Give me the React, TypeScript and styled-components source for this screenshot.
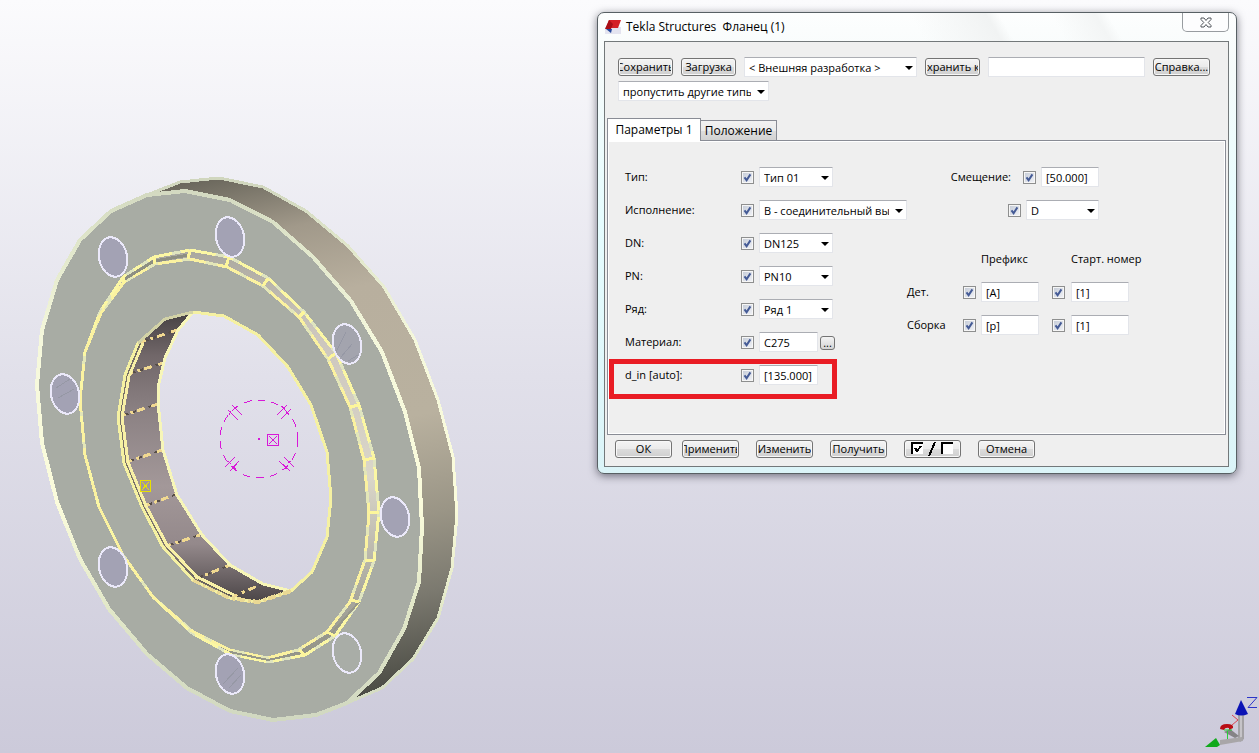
import React, { useId } from "react";
import styled, { createGlobalStyle } from "styled-components";

const GlobalStyle = createGlobalStyle`
  * { box-sizing: border-box; }
  body {
    margin: 0;
    font-family: "Open Sans", "Noto Sans", sans-serif;
    font-size: 11px;
    line-height: 16px;
    color: #000;
  }
  button, input, select { font: inherit; color: inherit; margin: 0; }
`;

const Viewport = styled.main`
  position: relative;
  min-height: 100vh;
  overflow: hidden;
  background: linear-gradient(#fbfbfd, #e1e0ea 50%, #cccada);
`;

const ModelView = styled.svg`
  display: block;
`;

const AxisTriad = styled.svg`
  position: absolute;
  right: 0;
  bottom: 0;
`;

const Dialog = styled.section`
  position: absolute;
  left: 597px;
  top: 12px;
  width: 640px;
  padding: 0 7px 6px 6px;
  border: 1px solid #586064;
  border-radius: 7px;
  background: linear-gradient(#fdfefe, #f6fbfb 12%, #e6fdff 45%, #dbf4f8);
  box-shadow: 0 2px 8px rgba(40, 40, 55, 0.6);
`;

const TitleBar = styled.header`
  display: flex;
  align-items: center;
  gap: 5px;
  height: 28px;
  padding-left: 1px;
  background: linear-gradient(60deg, transparent 50%, #f1f3f3 62%, transparent 64%, transparent 72%, #f3f5f5 79%, transparent 81%);
`;

const Title = styled.h1`
  margin: 0;
  flex: 1;
  font-size: 12px;
  font-weight: 400;
  white-space: pre;
`;

const CloseButton = styled.button`
  display: flex;
  align-items: center;
  justify-content: center;
  align-self: flex-start;
  width: 47px;
  height: 19px;
  padding: 0;
  border: 1px solid #989ca0;
  border-top: 0;
  border-radius: 0 0 5px 5px;
  background: #fdfdfe;
`;

const Client = styled.div`
  border: 1px solid #73787a;
  background: #efefef;
  padding: 15px 2px 8px;
`;

const Toolbar = styled.div`
  display: flex;
  flex-wrap: wrap;
  align-items: center;
  gap: 4px 8px;
  padding: 0 11px;
`;

const PushButton = styled.button<{ $width: number }>`
  display: flex;
  align-items: center;
  width: ${(p) => p.$width}px;
  height: 18px;
  padding: 0 1px;
  border: 1px solid #747474;
  border-radius: 3px;
  background: linear-gradient(#f4f4f4, #ebebeb 48%, #dcdcdc 50%, #cfcfcf);
  box-shadow: inset 0 0 0 1px #f8f8f8;
`;

const ButtonText = styled.span`
  display: flex;
  flex: 1;
  min-width: 0;
  justify-content: center;
  overflow: hidden;
  white-space: nowrap;
`;

const TextBox = styled.input<{ $width: number }>`
  width: ${(p) => p.$width}px;
  height: 20px;
  padding: 0 4px;
  border: 1px solid #e3e5ea;
  border-top-color: #abadb3;
  border-radius: 1px;
  background: #fff;
`;

const SelectFrame = styled.span<{ $width: number }>`
  position: relative;
  width: ${(p) => p.$width}px;
  height: 20px;
`;

const SelectBox = styled.select`
  appearance: none;
  display: block;
  width: 100%;
  height: 20px;
  padding: 1px 17px 0 4px;
  border: 1px solid #e3e5ea;
  border-top-color: #abadb3;
  border-radius: 1px;
  background: #fff;
`;

const SelectArrow = styled.svg`
  position: absolute;
  right: 4px;
  top: 9px;
  pointer-events: none;
`;

const TickFrame = styled.span`
  position: relative;
  width: 13px;
  height: 13px;
`;

const TickBox = styled.input`
  appearance: none;
  display: block;
  width: 13px;
  height: 13px;
  border: 1px solid #8e8f8f;
  background: linear-gradient(135deg, #c3cad6, #f3f4f8);
  box-shadow: inset 0 0 0 1px #f6f6f6;
`;

const TickMark = styled.svg`
  position: absolute;
  left: 0;
  top: 0;
  pointer-events: none;
`;

const Tabs = styled.div`
  display: flex;
  align-items: flex-end;
  margin-top: 17px;
`;

const Tab = styled.button<{ $active?: boolean }>`
  position: relative;
  width: ${(p) => (p.$active ? 94 : 76)}px;
  height: ${(p) => (p.$active ? 23 : 20)}px;
  margin-bottom: ${(p) => (p.$active ? -1 : 0)}px;
  padding: 0;
  border: 1px solid #898c95;
  border-left-width: ${(p) => (p.$active ? 1 : 0)}px;
  border-bottom: 0;
  background: ${(p) => (p.$active ? "#fff" : "linear-gradient(#f2f2f2, #ebebeb 50%, #dddddd 52%, #d2d2d2)")};
  font-size: 12px;
  white-space: nowrap;
`;

const TabPanel = styled.div`
  display: flex;
  justify-content: space-between;
  padding: 26px 96px 49px 17px;
  border: 1px solid #898c95;
  box-shadow: inset 1px 1px 0 #fff, inset -1px -1px 0 #fff;
`;

const Column = styled.div`
  display: flex;
  flex-direction: column;
  gap: 13px;
`;

const FieldRow = styled.div`
  position: relative;
  display: grid;
  grid-template-columns: 116px 13px auto;
  align-items: center;
  justify-content: start;
  height: 20px;
`;

const FieldControls = styled.div`
  display: flex;
  align-items: center;
  gap: 2px;
  padding-left: 5px;
`;

const Highlight = styled.span`
  position: absolute;
  left: -16px;
  top: -6px;
  width: 228px;
  height: 40px;
  border: 5px solid #e91c24;
  pointer-events: none;
`;

const OffsetRow = styled.div`
  display: flex;
  align-items: center;
  justify-content: flex-end;
  gap: 5px;
  height: 20px;
  padding-right: 30px;
`;

const OffsetLabel = styled.label`
  margin-right: 7px;
`;

const NumberingTable = styled.div`
  display: grid;
  grid-template-columns: 56px 13px 63px 32px 58px;
  grid-auto-rows: 20px;
  row-gap: 13px;
  align-items: center;
  padding-top: 16px;
`;

const NumberingHead = styled.span<{ $column: number; $indent?: number }>`
  grid-column: ${(p) => p.$column};
  padding-left: ${(p) => p.$indent ?? 0}px;
  white-space: nowrap;
`;

const NumberingCell = styled.span<{ $indent: number }>`
  display: flex;
  padding-left: ${(p) => p.$indent}px;
`;

const BrowseButton = styled.button`
  width: 15px;
  height: 14px;
  margin-top: 2px;
  padding: 0;
  border: 1px solid #747474;
  border-radius: 3px;
  background: linear-gradient(#f4f4f4, #d4d4d4);
  line-height: 8px;
`;

const Footer = styled.footer`
  display: flex;
  gap: 17px;
  padding: 5px 8px 0;

  & > :first-child { margin-right: -7px; }
`;

function Check({ label }: { label: string }) {
  return (
    <TickFrame>
      <TickBox type="checkbox" defaultChecked aria-label={label} />
      <TickMark width="13" height="13" viewBox="0 0 13 13">
        <path d="M3.5 6.3 L5.6 9.2 L9.4 3.4" fill="none" stroke="#455b96" strokeWidth="2" />
      </TickMark>
    </TickFrame>
  );
}

function DropDown({ id, label, value, width }: { id?: string; label?: string; value: string; width: number }) {
  return (
    <SelectFrame $width={width}>
      <SelectBox id={id} aria-label={label}>
        <option>{value}</option>
      </SelectBox>
      <SelectArrow width="8" height="4" viewBox="0 0 8 4">
        <path d="M0 0H8L4 4Z" fill="#000" />
      </SelectArrow>
    </SelectFrame>
  );
}

function Push({ children, width }: { children: React.ReactNode; width: number }) {
  return (
    <PushButton type="button" $width={width}>
      <ButtonText>{children}</ButtonText>
    </PushButton>
  );
}

type Field = { label: string; value: string; width: number; kind: "select" | "text"; browse?: boolean; marked?: boolean };

const fields: Field[] = [
  { label: "Тип:", value: "Тип 01", width: 74, kind: "select" },
  { label: "Исполнение:", value: "B - соединительный выступ", width: 148, kind: "select" },
  { label: "DN:", value: "DN125", width: 74, kind: "select" },
  { label: "PN:", value: "PN10", width: 74, kind: "select" },
  { label: "Ряд:", value: "Ряд 1", width: 74, kind: "select" },
  { label: "Материал:", value: "C275", width: 59, kind: "text", browse: true },
  { label: "d_in [auto]:", value: "[135.000]", width: 59, kind: "text", marked: true },
];

function ParameterRow({ field }: { field: Field }) {
  const id = useId();
  return (
    <FieldRow>
      <label htmlFor={id}>{field.label}</label>
      <Check label={field.label} />
      <FieldControls>
        {field.kind === "select" ? (
          <DropDown id={id} value={field.value} width={field.width} />
        ) : (
          <TextBox id={id} $width={field.width} defaultValue={field.value} />
        )}
        {field.browse && <BrowseButton type="button" aria-label="Выбрать материал">...</BrowseButton>}
      </FieldControls>
      {field.marked && <Highlight />}
    </FieldRow>
  );
}

function NumberingRow({ label, prefix }: { label: string; prefix: string }) {
  const id = useId();
  return (
    <>
      <label htmlFor={id}>{label}</label>
      <Check label={`${label} префикс`} />
      <NumberingCell $indent={5}>
        <TextBox id={id} $width={58} defaultValue={prefix} />
      </NumberingCell>
      <NumberingCell $indent={13}>
        <Check label={`${label} старт. номер`} />
      </NumberingCell>
      <TextBox $width={58} defaultValue="[1]" aria-label={`${label} номер`} />
    </>
  );
}

const outerFront =
  "185,191 230,200 273,222 313,257 351,301 382,352 405,412 419,468 422,527 419,582 404,629 379,673 347,703 316,715 273,720 230,711 187,688 147,654 109,609 80,559 57,502 42,443 37,385 42,330 57,280 80,240 111,211 147,195";
const outerBack =
  "147,195 180,182 219,178 263,187 306,211 348,246 384,287 415,340 438,400 453,457 457,515 452,568 438,618 413,659 382,688 347,703";
const outerNear =
  "379,673 404,629 419,582 422,527 419,468 405,412 382,352 351,301 313,257 273,222 230,200 185,191";
const grooveOuter =
  "190,250 229,257 268,278 304,312 336,353 359,405 374,458 379,512 374,561 359,602 335,636 305,655 269,662 230,654 192,633 153,597 123,555 99,507 85,455 80,400 85,352 100,312 123,277 154,257";
const grooveInner =
  "190,259 227,267 263,286 299,317 328,359 350,407 364,460 369,513 365,560 350,602 327,632 298,650 267,658 230,650 192,631 153,597 123,555 99,507 85,455 80,400 85,352 101,313 124,282 155,264";
const boreFront =
  "193,312 224,316 258,335 288,367 311,405 327,452 331,498 327,537 312,572 291,591 258,602 230,598 193,580 163,547 142,507 124,463 118,417 125,375 138,343 165,319";
const boreBack = "193,312 178,330 165,358 159,383 158,403 163,450 177,495 202,535 230,565 263,584 291,591";
const boreNear = "165,319 138,343 125,375 118,417 124,463 142,507 163,547 193,580 230,598 258,602 291,591";

const boltHoles = [
  [113, 257], [230, 237], [347, 344], [395, 517], [347, 653], [230, 674], [113, 567], [65, 394],
];
const boreRibs = [
  [138, 343, 177, 330], [125, 375, 163, 363], [118, 417, 158, 404], [124, 463, 162, 450],
  [142, 507, 177, 494], [163, 547, 200, 535], [193, 580, 230, 565], [230, 598, 262, 584],
];
const grooveJoints = [
  [123, 277, 124, 284], [154, 257, 155, 264], [190, 250, 188, 259], [229, 257, 226, 267], [268, 278, 263, 286],
  [304, 312, 299, 317], [336, 353, 328, 359], [359, 405, 350, 407], [374, 458, 364, 460], [379, 512, 369, 513],
  [374, 561, 365, 560], [359, 602, 351, 600], [335, 636, 327, 632], [305, 655, 299, 650],
];
const cutMarks = [
  [232, 405, 242, 415], [228, 410, 238, 420],
  [287, 405, 277, 415], [291, 409, 281, 419],
  [235, 457, 225, 467], [239, 461, 230, 471],
  [284, 457, 294, 467], [279, 461, 290, 471],
  [234, 409, 238, 406], [229, 415, 231, 411], [281, 406, 285, 409], [286, 411, 289, 415],
  [228, 461, 231, 464], [232, 466, 236, 469], [288, 463, 291, 461], [283, 470, 288, 466],
];

function FlangeModel() {
  return (
    <ModelView width="480" height="753" viewBox="0 0 480 753" fill="none" shapeRendering="crispEdges">
      <defs>
        <linearGradient id="rim" gradientUnits="userSpaceOnUse" x1="190" y1="180" x2="300" y2="720">
          <stop offset="0" stopColor="#69665b" />
          <stop offset="0.12" stopColor="#a1998a" />
          <stop offset="0.25" stopColor="#b8af9e" />
          <stop offset="0.5" stopColor="#b9b19f" />
          <stop offset="0.68" stopColor="#9a9586" />
          <stop offset="0.82" stopColor="#7b796f" />
          <stop offset="1" stopColor="#45463f" />
        </linearGradient>
        <linearGradient id="bore" gradientUnits="userSpaceOnUse" x1="0" y1="312" x2="0" y2="602">
          <stop offset="0" stopColor="#464143" />
          <stop offset="0.15" stopColor="#716769" />
          <stop offset="0.35" stopColor="#8c8284" />
          <stop offset="0.6" stopColor="#a39899" />
          <stop offset="0.8" stopColor="#94898b" />
          <stop offset="1" stopColor="#4b4547" />
        </linearGradient>
        <linearGradient id="edge" gradientUnits="userSpaceOnUse" x1="0" y1="178" x2="0" y2="720">
          <stop offset="0" stopColor="#d0d6be" />
          <stop offset="0.12" stopColor="#e0e6cb" />
          <stop offset="0.3" stopColor="#f5f8dc" />
          <stop offset="0.6" stopColor="#fbfcdc" />
          <stop offset="0.8" stopColor="#e1e7c8" />
          <stop offset="1" stopColor="#d1d8c1" />
        </linearGradient>
        <linearGradient id="groove" gradientUnits="userSpaceOnUse" x1="0" y1="250" x2="0" y2="662">
          <stop offset="0" stopColor="#aaa89f" />
          <stop offset="0.2" stopColor="#ccc6bd" />
          <stop offset="0.55" stopColor="#dad6c9" />
          <stop offset="0.75" stopColor="#b8b6aa" />
          <stop offset="1" stopColor="#8f9088" />
        </linearGradient>
      </defs>

      <polygon points={`${outerBack} ${outerNear}`} fill="url(#rim)" />
      <path
        d={`M${outerFront.replace(/ /g, "L")}Z M${boreFront.replace(/ /g, "L")}Z`}
        fill="#a8aca4"
        fillRule="evenodd"
      />
      <polyline points={outerBack} stroke="url(#edge)" strokeWidth="3" />
      <polygon points={outerFront} stroke="url(#edge)" strokeWidth="4" />

      <path
        d={`M${grooveOuter.replace(/ /g, "L")}Z M${grooveInner.replace(/ /g, "L")}Z`}
        fill="url(#groove)"
        fillRule="evenodd"
      />
      <polygon points={grooveOuter} stroke="#dfe4bf" strokeWidth="3" />
      <polygon points={grooveInner} stroke="#e3e6b8" strokeWidth="3" />
      <polygon points={grooveOuter} stroke="#fbf7a4" strokeWidth="3" strokeDasharray="26 9 9 7" />
      <polygon points={grooveInner} stroke="#fbf2a0" strokeWidth="3" strokeDasharray="16 12 24 8" />
      <polyline points="123,280 154,261 189,255" stroke="#8d8f83" strokeWidth="3" />
      <polyline points="359,602 331,634 302,653 268,660 230,652" stroke="#96978a" strokeWidth="2" />
      {grooveJoints.map(([x1, y1, x2, y2]) => (
        <line key={`${x1}-${y1}`} x1={x1} y1={y1} x2={x2} y2={y2} stroke="#fdf69b" strokeWidth="3" />
      ))}

      <polygon points={`${boreNear} ${boreBack.split(" ").reverse().join(" ")}`} fill="url(#bore)" />
      {boreRibs.map(([x1, y1, x2, y2]) => (
        <g key={`${x1}-${y1}`}>
          <line x1={x1} y1={y1} x2={x2} y2={y2} stroke="#574e48" strokeWidth="2" strokeDasharray="3 5" />
          <line x1={x1} y1={y1} x2={x2} y2={y2} stroke="#f0d890" strokeWidth="3" strokeDasharray="8 5 3 4 8 7" />
        </g>
      ))}
      <polyline points={boreBack} stroke="#f7f6b8" strokeWidth="3" />
      <polygon points={boreFront} stroke="#f5f1a2" strokeWidth="3" />
      <polyline points="193,312 165,319 138,343" stroke="#d2d2a6" strokeWidth="3" />
      <polyline points="193,580 230,598 258,602 291,591" stroke="#ead994" strokeWidth="4" strokeDasharray="8 3 3 2" />
      <polyline
        points="143,343 129,376 122,417 128,462 146,506 167,545 197,577 234,595"
        stroke="#f8f0a6"
        strokeWidth="3"
      />
      <polyline points="141,343 127,376 120,417 126,463 144,507 165,546 195,579 232,597" stroke="#777067" />

      {boltHoles.map(([x, y], i) => (
        <ellipse
          key={`${x}-${y}`}
          cx={x}
          cy={y}
          rx="14"
          ry="20"
          transform={`rotate(-13 ${x} ${y})`}
          fill={i === 4 ? "#a9ada7" : i === 2 ? "#a3a4ae" : "#a3a2b4"}
          stroke="#ebe9fa"
          strokeWidth="2"
        />
      ))}
      <path d="M336 352L346 332M341 357L352 344M348 361L358 355M223 684L238 668M229 688L241 675M56 388L70 379M58 398L74 389" stroke="#9698a5" />

      <g stroke="#d818d8">
        <circle cx="259" cy="439" r="39" strokeDasharray="8 6" />
        {cutMarks.map(([x1, y1, x2, y2]) => (
          <line key={`${x1}-${y1}`} x1={x1} y1={y1} x2={x2} y2={y2} />
        ))}
        <path d="M267.500 434.500h11v11h-11zM269 436l8 8M277 436l-8 8" />
        <rect x="258" y="438" width="2" height="2" fill="#d818d8" stroke="none" />
      </g>
      <path d="M140.500 480.500h10v11h-10zM142 482l7 8M149 482l-7 8" stroke="#e8e000" />
    </ModelView>
  );
}

function Axes() {
  return (
    <AxisTriad width="70" height="70" viewBox="0 0 70 70">
      <path d="M49 31h6v25l-4 3l-2-3z" fill="#a3a1a4" />
      <path d="M51 31h2v24h-2z" fill="#c6c4c8" />
      <path d="M53 54L31 57v5L54 58z" fill="#a8a6a8" />
      <path d="M50 53L41 46L35 49L46 55z" fill="#858386" />
      <path d="M16 64L27 55L31 62L28 64z" fill="#10a91b" />
      <path d="M31 46q0-5 7-5q7 0 6 4l-4 2v-2q-4-1-5 2z" fill="#b90d14" />
      <path d="M38.500 48V56M35 47h8" stroke="#28cf3a" fill="none" />
      <path d="M43 32L49 37L43 42" stroke="#d94452" fill="none" />
      <path d="M52 17L46 31q6 3 13 0z" fill="#0b13b5" />
      <path d="M58 14.500H68L59 24.500H68" fill="none" stroke="#2c35c9" />
    </AxisTriad>
  );
}

export default function App() {
  const offsetId = useId();
  return (
    <Viewport>
      <GlobalStyle />
      <FlangeModel />
      <Axes />
      <Dialog aria-label="Фланец">
        <TitleBar>
          <svg width="16" height="14" viewBox="0 0 16 14">
            <path d="M0 7h16v7H0z" fill="#e4e4f0" />
            <path d="M4 0h12l-3 8H1z" fill="#d42027" />
            <path d="M4 0l4 4-2 5H0z" fill="#a90f17" />
            <path d="M1 9h6l-1 4z" fill="#24479c" />
          </svg>
          <Title>{"Tekla Structures  Фланец (1)"}</Title>
          <CloseButton type="button" aria-label="Закрыть">
            <svg width="12" height="11" viewBox="0 0 12 11">
              <path
                d="M1 1h3l2 2.500L8 1h3v1.500L8.200 5.500L11 8.500V10H8L6 7.500L4 10H1V8.500L3.800 5.500L1 2.500z"
                fill="#fff"
                stroke="#50545a"
              />
            </svg>
          </CloseButton>
        </TitleBar>
        <Client>
          <Toolbar>
            <Push width={55}>Сохранить</Push>
            <Push width={55}>Загрузка</Push>
            <DropDown label="Набор параметров" value="< Внешняя разработка >" width={173} />
            <Push width={55}>Сохранить как</Push>
            <TextBox $width={157} aria-label="Имя файла" />
            <Push width={57}>Справка...</Push>
            <DropDown label="Фильтр" value="пропустить другие типы" width={151} />
          </Toolbar>
          <Tabs role="tablist">
            <Tab type="button" role="tab" aria-selected="true" $active>Параметры 1</Tab>
            <Tab type="button" role="tab" aria-selected="false">Положение</Tab>
          </Tabs>
          <TabPanel role="tabpanel">
            <Column>
              {fields.map((field) => (
                <ParameterRow key={field.label} field={field} />
              ))}
            </Column>
            <Column>
              <OffsetRow>
                <OffsetLabel htmlFor={offsetId}>Смещение:</OffsetLabel>
                <Check label="Смещение" />
                <TextBox id={offsetId} $width={58} defaultValue="[50.000]" />
              </OffsetRow>
              <OffsetRow>
                <Check label="Направление" />
                <DropDown label="Направление смещения" value="D" width={73} />
              </OffsetRow>
              <NumberingTable>
                <NumberingHead $column={3} $indent={5}>Префикс</NumberingHead>
                <NumberingHead $column={5}>Старт. номер</NumberingHead>
                <NumberingRow label="Дет." prefix="[A]" />
                <NumberingRow label="Сборка" prefix="[p]" />
              </NumberingTable>
            </Column>
          </TabPanel>
          <Footer>
            <Push width={57}>ОК</Push>
            <Push width={57}>Применить</Push>
            <Push width={57}>Изменить</Push>
            <Push width={57}>Получить</Push>
            <PushButton type="button" $width={57} aria-label="Переключить флажки">
              <ButtonText>
                <svg width="44" height="14" viewBox="0 0 44 14" shapeRendering="crispEdges">
                  <path d="M1 1h11v11H1zM31 1h11v11H31z" fill="#fff" />
                  <path d="M1 12V1H12M31 12V1H42" fill="none" stroke="#000" strokeWidth="2" />
                  <path d="M4 6L6 9L10 4" fill="none" stroke="#000" strokeWidth="2" />
                  <path d="M24 0L18 14" stroke="#000" strokeWidth="2" />
                </svg>
              </ButtonText>
            </PushButton>
            <Push width={57}>Отмена</Push>
          </Footer>
        </Client>
      </Dialog>
    </Viewport>
  );
}
